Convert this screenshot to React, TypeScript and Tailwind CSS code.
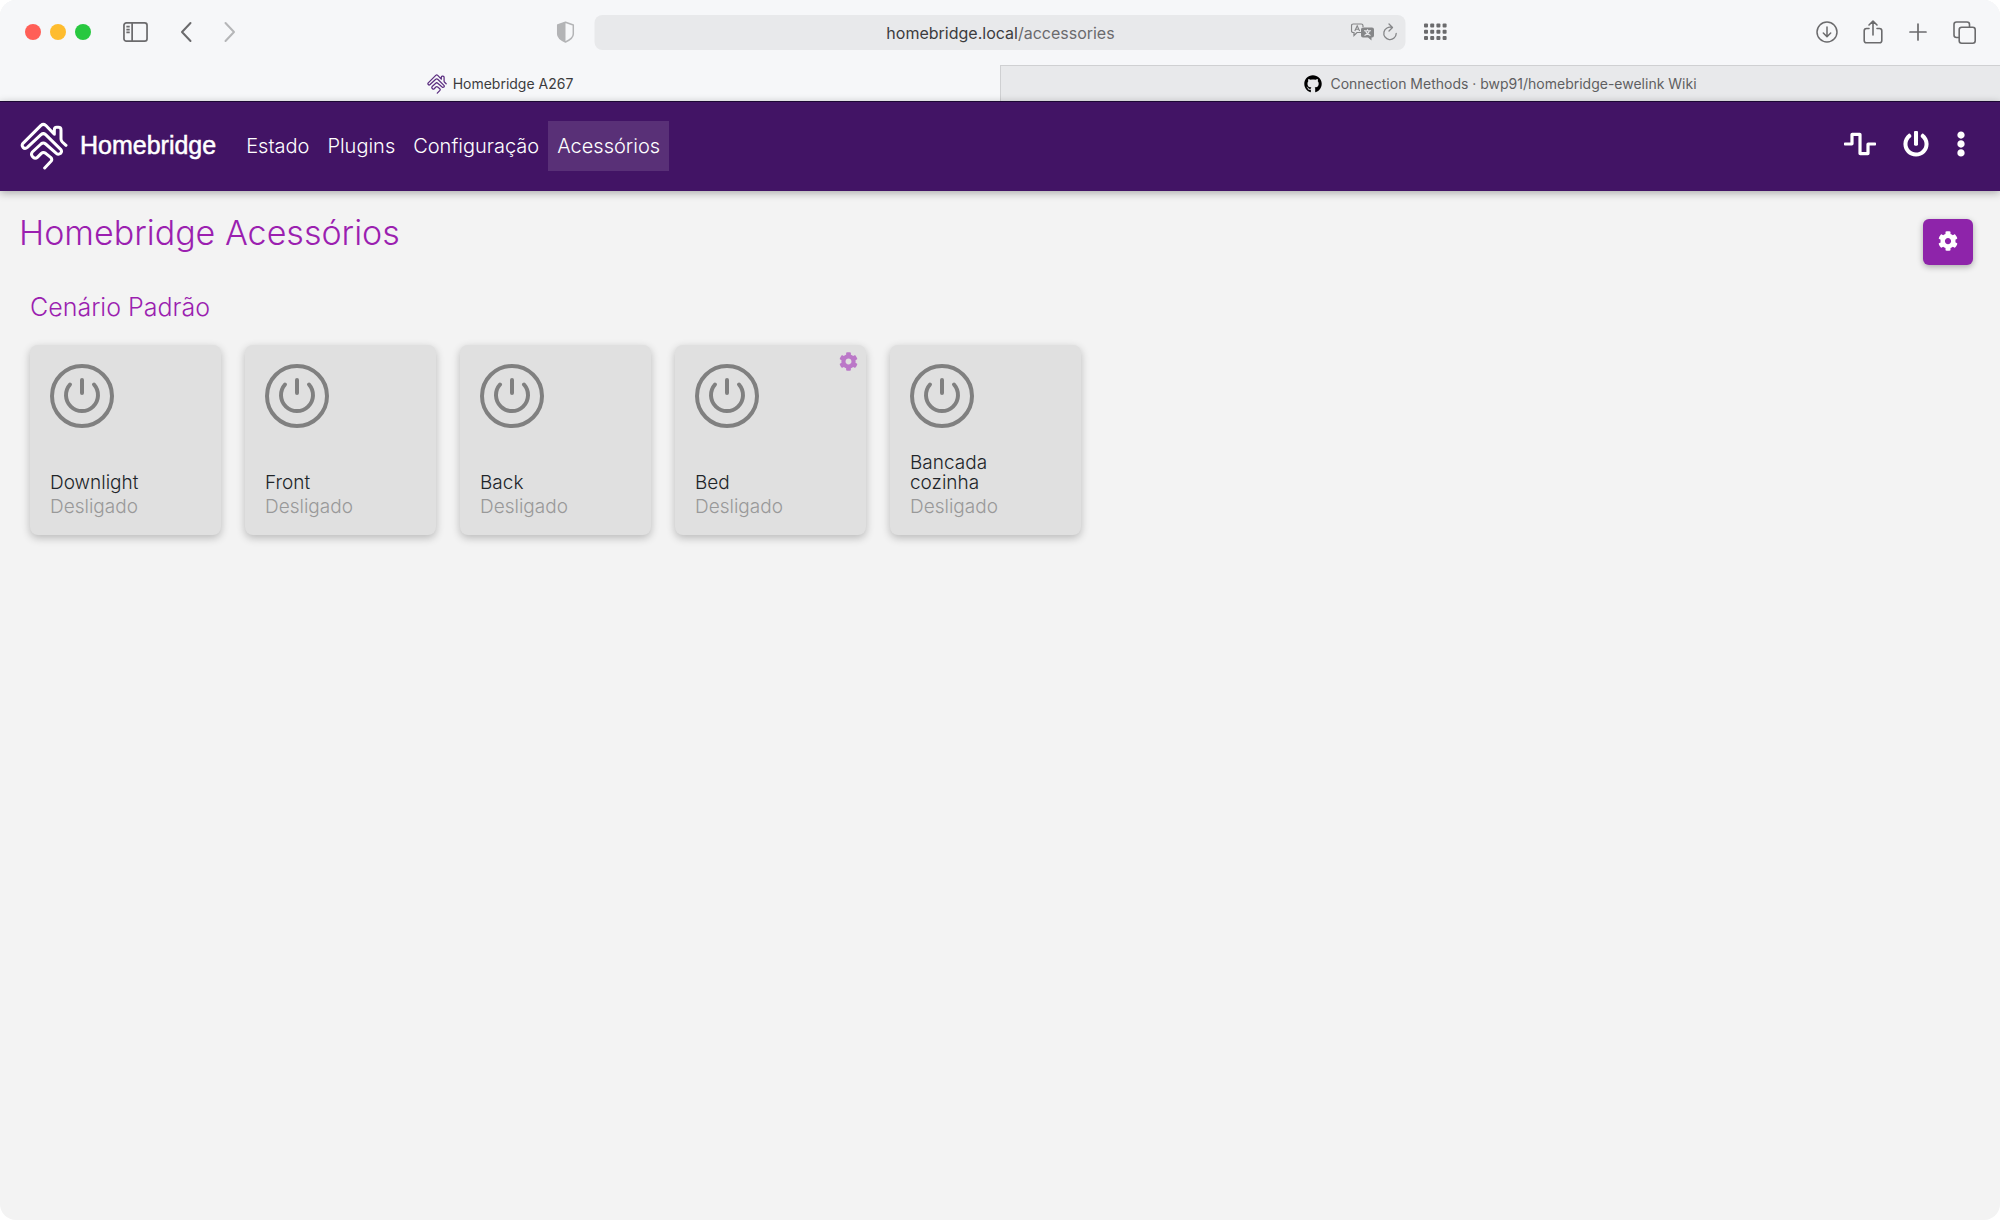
import { FaCog, FaEllipsisV, FaGithub, FaPowerOff, FaWaveSquare } from 'react-icons/fa';

interface Accessory {
  id: number;
  name: string;
  status: string;
  showSettings?: boolean;
}

const accessories: Accessory[] = [
  { id: 1, name: 'Downlight', status: 'Desligado' },
  { id: 2, name: 'Front', status: 'Desligado' },
  { id: 3, name: 'Back', status: 'Desligado' },
  { id: 4, name: 'Bed', status: 'Desligado', showSettings: true },
  { id: 5, name: 'Bancada cozinha', status: 'Desligado' },
];

const links = [
  { label: 'Estado', href: '/status' },
  { label: 'Plugins', href: '/plugins' },
  { label: 'Configuração', href: '/config' },
  { label: 'Acessórios', href: '/accessories', active: true },
];

function HomebridgeLogo({ className }: { className?: string }) {
  return (
    <svg viewBox="0 0 144 144" className={className} fill="none" stroke="currentColor" strokeWidth="9" strokeLinecap="round" strokeLinejoin="round">
      <path d="M138 70 L127 60 Q123 56 123 51 V24 Q123 16 115 16 H110 Q103 16 103 23 V37 L77 10 Q70 4 63 10 L9 64 Q4 70 9 76 Q15 82 22 76 L63 38 Q70 32 77 38 L122 82 Q127 88 122 94 Q115 99 109 94 L77 66 Q70 60 63 66 L37 90 Q32 97 37 103 L40 106 Q46 112 52 106 L64 94 Q70 89 77 94 L92 106 Q98 112 93 118 L74 138" />
    </svg>
  );
}

function BrowserToolbar() {
  return (
    <div className="relative flex h-[65px] items-center justify-between pl-[25px] pr-6 pb-px text-[#6b6b6d]">
      <div className="flex items-center">
        <div className="flex gap-[9px]">
          <span className="size-4 rounded-full bg-[#ff5f57]" />
          <span className="size-4 rounded-full bg-[#febc2e]" />
          <span className="size-4 rounded-full bg-[#28c840]" />
        </div>
        <button aria-label="Barra lateral" className="ml-8">
          <svg width="25" height="22" viewBox="0 0 26 22" fill="none" stroke="currentColor" strokeWidth="1.8">
            <rect x="1" y="1.5" width="24" height="19" rx="2.5" />
            <path d="M9.5 1.5v19M3.5 5.5h3.5M3.5 8.5h3.5M3.5 11.5h3.5" />
          </svg>
        </button>
        <button aria-label="Voltar" className="ml-8">
          <svg width="12" height="22" viewBox="0 0 12 22" fill="none" stroke="currentColor" strokeWidth="2" strokeLinecap="round" strokeLinejoin="round">
            <path d="M10.5 2 2 11l8.500 9" />
          </svg>
        </button>
        <button aria-label="Avançar" className="ml-8 text-[#b5b6b8]">
          <svg width="12" height="22" viewBox="0 0 12 22" fill="none" stroke="currentColor" strokeWidth="2" strokeLinecap="round" strokeLinejoin="round">
            <path d="M1.500 2 10 11l-8.500 9" />
          </svg>
        </button>
      </div>

      {/* Address bar stays centred over the toolbar */}
      <div className="absolute left-1/2 flex -translate-x-1/2 items-center pl-1">
        <button aria-label="Privacidade" className="mr-5 text-[#b3b4b6]">
          <svg width="18" height="22" viewBox="0 0 18 22">
            <path d="M9 1.200 16.800 4v9c0 3.500-4 6.300-7.800 8C5.200 19.300 1.200 16.500 1.200 13V4z" fill="none" stroke="currentColor" strokeWidth="1.500" strokeLinejoin="round" />
            <path d="M9 1v20C5.200 19.300 1.200 16.500 1.200 13V4z" fill="currentColor" />
          </svg>
        </button>
        <div className="flex h-[35px] w-[811px] items-center rounded-lg bg-[#e8e9eb] pr-2">
          <p className="flex-1 pl-14 pt-0.5 text-center text-base text-[#6b6b6d]">
            <span className="text-[#3c3c3e]">homebridge.local</span>/accessories
          </p>
          <button aria-label="Traduzir" className="text-[#858688]">
            <svg width="24" height="18" viewBox="0 0 24 18">
              <path d="M10.500 9.500H6.500L3.500 12.500V9.500H2.800Q1 9.500 1 7.700V2.800Q1 1 2.800 1H10.700Q12.500 1 12.500 2.800V4" fill="none" stroke="currentColor" strokeWidth="1.200" />
              <path d="M4.300 8 6.700 2.800 9.100 8M5.200 6.300h3" fill="none" stroke="currentColor" strokeWidth="1.100" />
              <path d="M12.500 4.500H21.500Q23.500 4.500 23.500 6.500V12.500Q23.500 14.500 21.500 14.500H21V17.500L17.500 14.500H12.500Q10.500 14.500 10.500 12.500V6.500Q10.500 4.500 12.500 4.500Z" fill="currentColor" />
              <path d="M13.500 7.700h7M17 6.300v1.400M19 7.700q-1 3.300-5 4.800M15 7.700q1 3.300 5 4.800" fill="none" stroke="#e8e9eb" strokeWidth="1.100" />
            </svg>
          </button>
          <button aria-label="Recarregar" className="ml-2">
            <svg width="15" height="18" viewBox="0 0 15 18" fill="none" stroke="#858688" strokeWidth="1.300" strokeLinecap="round" strokeLinejoin="round">
              <path d="M9.500 4.500A6.200 6.200 0 1 0 13.700 10.500M6.500 1 10 4.500 6.500 8" />
            </svg>
          </button>
        </div>
        <button aria-label="Favoritos" className="ml-[18px]">
          <svg width="24" height="18" viewBox="0 0 24 18" fill="currentColor">
            {[0, 1, 2].map((row) =>
              [0, 1, 2, 3].map((col) => <rect key={`${row}-${col}`} x={0.5 + col * 6.2} y={0.5 + row * 6.3} width="4" height="4" rx="1" />)
            )}
          </svg>
        </button>
      </div>

      <div className="flex items-center gap-[25px]">
        <button aria-label="Transferências">
          <svg width="22" height="22" viewBox="0 0 22 22" fill="none" stroke="currentColor" strokeWidth="1.500" strokeLinecap="round" strokeLinejoin="round">
            <circle cx="11" cy="11" r="10" />
            <path d="M11 6v9.500M7.300 12 11 15.700 14.700 12" />
          </svg>
        </button>
        <button aria-label="Partilhar">
          <svg width="20" height="25" viewBox="0 0 20 25" fill="none" stroke="currentColor" strokeWidth="1.600" strokeLinecap="round" strokeLinejoin="round">
            <path d="M6 8.500H3.500Q1.200 8.500 1.200 10.800V20.500Q1.200 22.800 3.500 22.800H16.500Q18.800 22.800 18.800 20.500V10.800Q18.800 8.500 16.500 8.500H14M10 15V1.500M6 5 10 1.200 14 5" />
          </svg>
        </button>
        <button aria-label="Novo separador">
          <svg width="20" height="20" viewBox="0 0 20 20" fill="none" stroke="currentColor" strokeWidth="1.700" strokeLinecap="round">
            <path d="M10 2v16M2 10h16" />
          </svg>
        </button>
        <button aria-label="Todos os separadores">
          <svg width="23" height="23" viewBox="0 0 23 23" fill="none" stroke="currentColor" strokeWidth="1.600">
            <path d="M6 16.500H3.500Q1 16.500 1 14V3.500Q1 1 3.500 1H14Q16.500 1 16.500 3.500V6" />
            <rect x="6.200" y="6.200" width="16" height="16" rx="2.500" />
          </svg>
        </button>
      </div>
    </div>
  );
}

function BrowserTabs() {
  return (
    <div className="grid h-9 grid-cols-2 text-sm">
      <a href="/accessories" className="flex items-center justify-center gap-1.5 pt-0.5 text-[#3c3c3e]">
        <HomebridgeLogo className="size-5 text-[#5b2d80]" />
        Homebridge A267
      </a>
      <a href="/wiki" className="flex items-center justify-center gap-2 border-l border-t border-[#cfd0d2] bg-[#e8e9eb] text-[#5f5f61]">
        <FaGithub size={18} className="text-black" />
        Connection Methods · bwp91/homebridge-ewelink Wiki
      </a>
    </div>
  );
}

function Navbar() {
  return (
    <nav className="flex h-[90px] items-center justify-between border-t border-[#1c0833] bg-[#421465] pb-0.5 pl-5 pr-[26px] text-white shadow-[0_2px_8px_rgba(0,0,0,0.3)]">
      <div className="flex items-center">
        <a href="/" className="flex items-center gap-3 font-['Liberation_Sans',Arial,sans-serif] text-[25px] [-webkit-text-stroke:0.5px_white]">
          <HomebridgeLogo className="size-12" />
          Homebridge
        </a>
        <div className="ml-[21px] flex text-xl">
          {links.map((link) => (
            <a
              key={link.label}
              href={link.href}
              className={link.active ? 'flex h-[50px] items-center bg-white/12 px-[9px]' : 'flex h-[50px] items-center px-[9px]'}
            >
              {link.label}
            </a>
          ))}
        </div>
      </div>
      <div className="flex items-center pb-1">
        <button aria-label="Registos">
          <FaWaveSquare size={32} />
        </button>
        <button aria-label="Reiniciar" className="ml-[27px]">
          <FaPowerOff size={26} />
        </button>
        <button aria-label="Menu" className="ml-[19px]">
          <FaEllipsisV size={26} />
        </button>
      </div>
    </nav>
  );
}

function AccessoryTile({ accessory }: { accessory: Accessory }) {
  return (
    <div className="relative flex h-[190px] w-[191px] flex-col justify-between rounded-lg bg-[#e0e0e0] pb-3.5 pl-5 pr-10 pt-[19px] shadow-[0_3px_8px_rgba(0,0,0,0.24)]">
      <svg width="64" height="64" viewBox="0 0 64 64" fill="none" stroke="#808080" strokeWidth="4" strokeLinecap="round">
        <circle cx="32" cy="32" r="30" />
        <path d="M32 16v13M20 20.500a16 16 0 1 0 24 0" />
      </svg>
      <div className="text-[19px]">
        <h3 className="leading-5 text-[#212529]">{accessory.name}</h3>
        <p className="leading-7 text-[#999999]">{accessory.status}</p>
      </div>
      {accessory.showSettings && (
        <button aria-label="Definições do acessório" className="absolute right-2 top-[7px] text-[#bb78c8]">
          <FaCog size={19} />
        </button>
      )}
    </div>
  );
}

export default function App() {
  return (
    <div className="bg-white">
      <div className="flex min-h-screen flex-col overflow-hidden rounded-2xl bg-[#f3f3f3] font-['Inter',sans-serif]">
        <header className="bg-[#f6f7f9]">
          <BrowserToolbar />
          <BrowserTabs />
        </header>
        <div className="flex-1 font-light">
          <Navbar />
          <main className="px-[19px]">
            <div className="flex items-start justify-between pr-2 pt-5">
              <h1 className="text-[34px] leading-[44px] text-[#9b1fb0]">Homebridge Acessórios</h1>
              <button
                aria-label="Definições"
                className="mt-2 flex h-[46px] w-[50px] items-center justify-center rounded-md bg-[#8e24aa] pb-0.5 text-white shadow-[0_2px_6px_rgba(0,0,0,0.3)]"
              >
                <FaCog size={20} />
              </button>
            </div>
            <section className="px-[11px] pt-[26px]">
              <h2 className="text-[25px] leading-8 text-[#9b1fb0]">Cenário Padrão</h2>
              <div className="mt-[22px] flex flex-wrap gap-6">
                {accessories.map((accessory) => (
                  <AccessoryTile key={accessory.id} accessory={accessory} />
                ))}
              </div>
            </section>
          </main>
        </div>
      </div>
    </div>
  );
}
